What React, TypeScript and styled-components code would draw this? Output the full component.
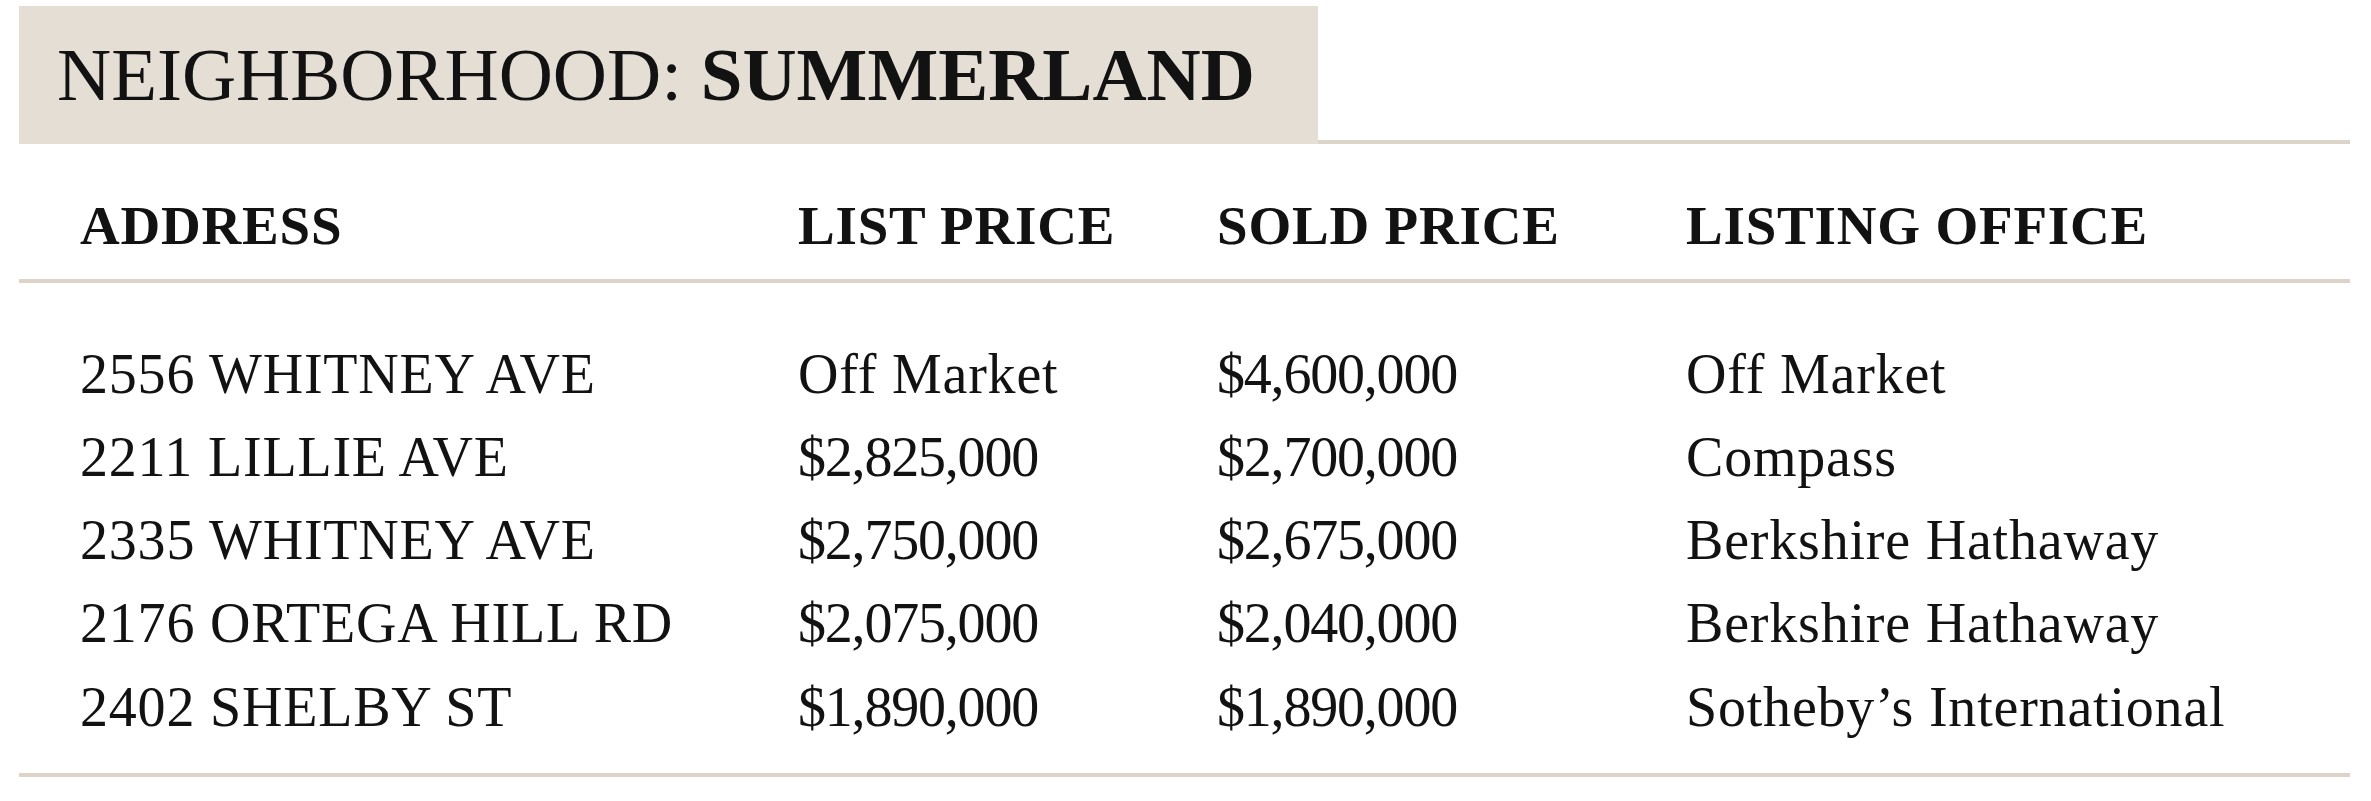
import * as React from 'react';
import styled, { createGlobalStyle } from 'styled-components';

const GlobalStyle = createGlobalStyle`
  html, body {
    margin: 0;
    padding: 0;
    background: #ffffff;
  }
  body {
    font-family: 'Liberation Serif', 'Times New Roman', serif;
    color: #121212;
  }
`;

const Page = styled.div`
  padding: 6px 21px 0 19px;
`;

const TitleBar = styled.div`
  display: flex;
  align-items: flex-end;
`;

const TitleBox = styled.h1`
  margin: 0;
  width: 1299px;
  box-sizing: border-box;
  background: #e5ded5;
  padding: 31px 0 32px 38px;
  font-size: 75px;
  line-height: 75px;
  font-weight: 400;
  white-space: nowrap;
  b {
    font-weight: 700;
  }
`;

const TitleRule = styled.div`
  flex: 1;
  border-bottom: 4px solid #ddd4c9;
`;

const Row = styled.div<{ $head?: boolean }>`
  display: grid;
  grid-template-columns: 718px 419px 469px 1fr;
  padding-left: 61px;
  font-size: ${(p) => (p.$head ? '55px' : '56px')};
  font-weight: ${(p) => (p.$head ? 700 : 400)};
  line-height: ${(p) => (p.$head ? '55px' : '83.25px')};
  letter-spacing: ${(p) => (p.$head ? '0.8px' : '0')};
  white-space: nowrap;
`;

const HeadSection = styled.div`
  padding: 54px 0 26px;
  border-bottom: 4px solid #ddd4c9;
`;

const BodySection = styled.div`
  padding: 49.5px 0 24px;
  border-bottom: 4px solid #ddd4c9;
`;

// prices run a touch narrower than words in the original face
const Cell = styled.div<{ $num?: boolean }>`
  letter-spacing: ${(p) => (p.$num ? '-1.2px' : '0.8px')};
`;

const HeadCell = styled.div``;

type Sale = {
  address: string;
  list: string;
  sold: string;
  office: string;
};

const sales: Sale[] = [
  { address: '2556 WHITNEY AVE', list: 'Off Market', sold: '$4,600,000', office: 'Off Market' },
  { address: '2211 LILLIE AVE', list: '$2,825,000', sold: '$2,700,000', office: 'Compass' },
  { address: '2335 WHITNEY AVE', list: '$2,750,000', sold: '$2,675,000', office: 'Berkshire Hathaway' },
  { address: '2176 ORTEGA HILL RD', list: '$2,075,000', sold: '$2,040,000', office: 'Berkshire Hathaway' },
  { address: '2402 SHELBY ST', list: '$1,890,000', sold: '$1,890,000', office: 'Sotheby\u2019s International' },
];

const isPrice = (v: string) => v.startsWith('$');

function App() {
  return (
    <Page>
      <GlobalStyle />
      <TitleBar>
        <TitleBox>
          NEIGHBORHOOD: <b>SUMMERLAND</b>
        </TitleBox>
        <TitleRule />
      </TitleBar>

      <HeadSection>
        <Row $head>
          <HeadCell>ADDRESS</HeadCell>
          <HeadCell>LIST PRICE</HeadCell>
          <HeadCell>SOLD PRICE</HeadCell>
          <HeadCell>LISTING OFFICE</HeadCell>
        </Row>
      </HeadSection>

      <BodySection>
        {sales.map((s) => (
          <Row key={s.address}>
            <Cell>{s.address}</Cell>
            <Cell $num={isPrice(s.list)}>{s.list}</Cell>
            <Cell $num={isPrice(s.sold)}>{s.sold}</Cell>
            <Cell>{s.office}</Cell>
          </Row>
        ))}
      </BodySection>
    </Page>
  );
}

export default App;
